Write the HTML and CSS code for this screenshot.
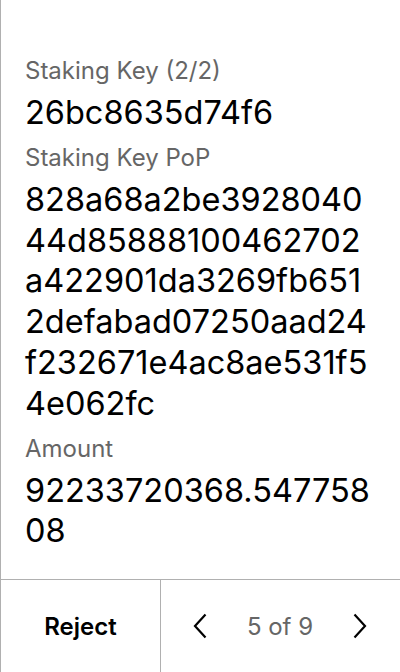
FILE: index.html
```html
<!DOCTYPE html>
<html>
<head>
<meta charset="utf-8">
<link rel="stylesheet" href="styles.css">
</head>
<body>
<div class="screen">
  <div class="content">
    <div class="field">
      <div class="label">Staking Key (2/2)</div>
      <div class="value">26bc8635d74f6</div>
    </div>
    <div class="field">
      <div class="label">Staking Key PoP</div>
      <div class="value">828a68a2be3928040<br>44d85888100462702<br>a422901da3269fb651<br>2defabad07250aad24<br>f232671e4ac8ae531f5<br>4e062fc</div>
    </div>
    <div class="field">
      <div class="label">Amount</div>
      <div class="value">92233720368.547758<br>08</div>
    </div>
  </div>
  <div class="footer">
    <div class="reject">Reject</div>
    <div class="nav">
      <svg class="chev" width="16" height="26" viewBox="0 0 16 26"><path d="M13.5 1.5 L3 13 L13.5 24.5" fill="none" stroke="#000" stroke-width="2.2"/></svg>
      <span class="page">5 of 9</span>
      <svg class="chev" width="16" height="26" viewBox="0 0 16 26"><path d="M2.5 1.5 L13 13 L2.5 24.5" fill="none" stroke="#000" stroke-width="2.2"/></svg>
    </div>
  </div>
</div>
</body>
</html>
```

FILE: styles.css
```css
html, body {
  margin: 0;
  padding: 0;
  background: #fff;
}
body {
  font-family: Inter, "Noto Sans", sans-serif;
  color: #000;
}
.screen {
  width: 400px;
  height: 672px;
  box-sizing: border-box;
  border-left: 1px solid #b0b0b0;
  display: flex;
  flex-direction: column;
}
.content {
  flex: 1;
  padding: 55px 20px 0 24px;
  display: flex;
  flex-direction: column;
  gap: 8px;
}
.label {
  font-size: 24px;
  line-height: 32px;
  color: #666;
  margin-bottom: 6px;
}
.value {
  font-size: 32.5px;
  line-height: 40.8px;
  color: #000;
}
.footer {
  height: 92px;
  border-top: 1px solid #b0b0b0;
  display: flex;
}
.reject {
  width: 159px;
  border-right: 1px solid #b0b0b0;
  display: flex;
  align-items: center;
  justify-content: center;
  font-size: 24px;
  font-weight: 600;
}
.nav {
  flex: 1;
  display: flex;
  align-items: center;
  justify-content: space-between;
  padding: 0 32px 0 31px;
}
.chev {
  display: block;
}
.page {
  font-size: 24px;
  color: #666;
}
```
